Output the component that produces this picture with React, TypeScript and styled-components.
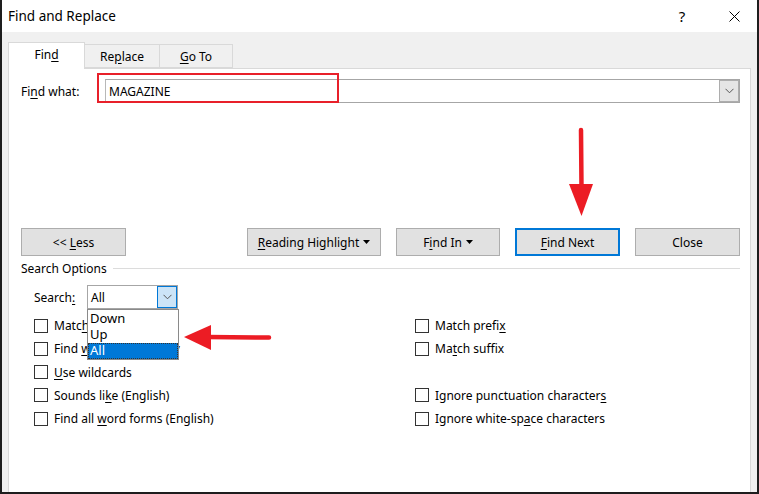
import React from "react";
import styled, { createGlobalStyle } from "styled-components";

const Global = createGlobalStyle`
  html, body { margin: 0; padding: 0; background: #fff; }
  body { font-family: "Noto Sans", "Segoe UI", sans-serif; font-size: 12px; color: #000; }
  * { box-sizing: border-box; }
`;

const Window = styled.div`
  width: 759px;
  height: 494px;
  border: 2px solid #1e1e1e;
  border-top: none;
  display: flex;
  flex-direction: column;
  overflow: hidden;
  background: #f0f0f0;
`;

const TitleBar = styled.div`
  height: 32px;
  flex: none;
  background: #fff;
  display: flex;
  align-items: center;
  padding-left: 6px;
`;

const Title = styled.div`
  font-size: 13.5px;
  flex: 1;
`;

const TitleButton = styled.div<{ $w: number }>`
  width: ${(p) => p.$w}px;
  height: 32px;
  display: flex;
  align-items: center;
  justify-content: center;
  font-size: 15px;
`;

const Body = styled.div`
  flex: 1;
  display: flex;
  flex-direction: column;
  padding: 10px 6px 0 6px;
  min-height: 0;
`;

const Tabs = styled.div`
  display: flex;
  align-items: flex-end;
  height: 26px;
  flex: none;
  position: relative;
  z-index: 1;
`;

const Tab = styled.div<{ $active?: boolean; $w: number }>`
  width: ${(p) => p.$w}px;
  height: ${(p) => (p.$active ? 27 : 24)}px;
  margin-bottom: ${(p) => (p.$active ? -1 : 0)}px;
  background: ${(p) => (p.$active ? "#fff" : "#f0f0f0")};
  border: 1px solid #d9d9d9;
  border-bottom: ${(p) => (p.$active ? "none" : "1px solid #d9d9d9")};
  border-left: ${(p) => (p.$active ? "1px solid #d9d9d9" : "none")};
  display: flex;
  align-items: center;
  justify-content: center;
  padding-bottom: ${(p) => (p.$active ? 3 : 0)}px;
`;

const Panel = styled.div`
  flex: 1;
  background: #fff;
  border: 1px solid #d9d9d9;
  border-bottom: none;
  padding: 10px 10px 0 12px;
  position: relative;
  display: flex;
  flex-direction: column;
`;

const FindRow = styled.div`
  display: flex;
  align-items: center;
  height: 24px;
  position: relative;
`;

const Label = styled.span<{ $w?: number }>`
  width: ${(p) => (p.$w ? `${p.$w}px` : "auto")};
  flex: none;
`;

const Combo = styled.div`
  flex: 1;
  height: 24px;
  border: 1px solid #a6a6a6;
  border-left-color: #b8b8b8;
  display: flex;
  align-items: center;
  padding-left: 3px;
`;

const ComboText = styled.span`
  flex: 1;
  font-size: 12px;
`;

const ComboButton = styled.div<{ $active?: boolean }>`
  width: 20px;
  height: 22px;
  background: ${(p) => (p.$active ? "#cce4f7" : "#e5e5e5")};
  border: 1px solid ${(p) => (p.$active ? "#0078d7" : "#adadad")};
  display: flex;
  align-items: center;
  justify-content: center;
`;

const Highlight = styled.div`
  position: absolute;
  left: 76px;
  top: -6px;
  width: 242px;
  height: 30px;
  border: 2px solid #e8202a;
  pointer-events: none;
`;

const Spacer = styled.div`
  height: 125px;
  flex: none;
`;

const ButtonRow = styled.div`
  display: flex;
  align-items: center;
  gap: 15px;
  height: 28px;
`;

const Button = styled.div<{ $w: number; $default?: boolean }>`
  width: ${(p) => p.$w}px;
  height: 28px;
  background: #e1e1e1;
  border: ${(p) => (p.$default ? "2px solid #0078d7" : "1px solid #adadad")};
  display: flex;
  align-items: center;
  justify-content: center;
  gap: 4px;
  flex: none;
`;

const Grow = styled.div`
  flex: 1;
`;

const GroupHeader = styled.div`
  display: flex;
  align-items: center;
  gap: 6px;
  margin-top: 3px;
  height: 18px;
  &::after {
    content: "";
    flex: 1;
    height: 1px;
    background: #dcdcdc;
  }
`;

const Options = styled.div`
  padding-left: 13px;
  display: flex;
  flex-direction: column;
`;

const SearchRow = styled.div`
  display: flex;
  align-items: center;
  margin-top: 8px;
  height: 24px;
`;

const SelectWrap = styled.div`
  position: relative;
  width: 91px;
  height: 24px;
`;

const Select = styled.div`
  height: 24px;
  border: 1px solid #a6a6a6;
  display: flex;
  align-items: center;
  padding-left: 3px;
`;

const List = styled.div`
  position: absolute;
  left: 0;
  top: 24px;
  width: 92px;
  border: 1px solid #8a8a8a;
  background: #fff;
  z-index: 3;
  padding: 1px 0 0 0;
`;

const ListItem = styled.div<{ $selected?: boolean }>`
  height: 16px;
  line-height: 15px;
  font-size: 13px;
  padding-left: 2px;
  background: ${(p) => (p.$selected ? "#0078d7" : "transparent")};
  color: ${(p) => (p.$selected ? "#fff" : "#000")};
  outline: ${(p) => (p.$selected ? "1px dotted #333" : "none")};
  outline-offset: -1px;
`;

const CheckGrid = styled.div`
  display: grid;
  grid-template-columns: 381px 1fr;
  grid-auto-rows: 23.25px;
  margin-top: 5px;
`;

const Check = styled.label`
  display: flex;
  align-items: center;
  gap: 6px;
  white-space: nowrap;
`;

const Box = styled.span`
  width: 14px;
  height: 14px;
  border: 1px solid #333;
  background: #fff;
  flex: none;
`;

const Arrow = styled.svg`
  position: absolute;
  pointer-events: none;
  z-index: 4;
`;

const U = styled.span`
  text-decoration: underline;
  text-underline-offset: 2px;
`;

const Chevron = () => (
  <svg width="9" height="6" viewBox="0 0 9 6">
    <path d="M0.5 0.8 L4.5 4.8 L8.5 0.8" fill="none" stroke="#555" strokeWidth="1" />
  </svg>
);

const Caret = () => (
  <svg width="7" height="4" viewBox="0 0 7 4">
    <path d="M0 0 L7 0 L3.5 4 Z" fill="#000" />
  </svg>
);

type Opt = { text: React.ReactNode } | null;

const left: Opt[] = [
  { text: <>Matc<U>h</U> case</> },
  { text: <>Find <U>w</U>hole words only</> },
  { text: <><U>U</U>se wildcards</> },
  { text: <>Sounds li<U>k</U>e (English)</> },
  { text: <>Find all <U>w</U>ord forms (English)</> },
];
const right: Opt[] = [
  { text: <>Match prefi<U>x</U></> },
  { text: <>Ma<U>t</U>ch suffix</> },
  null,
  { text: <>Ignore punctuation character<U>s</U></> },
  { text: <>Ignore white-sp<U>a</U>ce characters</> },
];

export default function App() {
  const cells: React.ReactNode[] = [];
  for (let i = 0; i < 5; i++) {
    [left[i], right[i]].forEach((o, j) => {
      cells.push(
        o ? (
          <Check key={`${i}-${j}`}>
            <Box />
            <span>{o.text}</span>
          </Check>
        ) : (
          <div key={`${i}-${j}`} />
        )
      );
    });
  }
  return (
    <>
      <Global />
      <Window>
        <TitleBar>
          <Title>Find and Replace</Title>
          <TitleButton $w={60}>?</TitleButton>
          <TitleButton $w={45}>
            <svg width="11" height="11" viewBox="0 0 11 11">
              <path d="M0.5 0.5 L10.5 10.5 M10.5 0.5 L0.5 10.5" stroke="#000" strokeWidth="1" />
            </svg>
          </TitleButton>
        </TitleBar>
        <Body>
          <Tabs>
            <Tab $active $w={77}><span>Fin<U>d</U></span></Tab>
            <Tab $w={75}><span>Re<U>p</U>lace</span></Tab>
            <Tab $w={73}><span><U>G</U>o To</span></Tab>
          </Tabs>
          <Panel>
            <FindRow>
              <Label $w={84}>Fi<U>n</U>d what:</Label>
              <Combo>
                <ComboText>MAGAZINE</ComboText>
                <ComboButton>
                  <Chevron />
                </ComboButton>
              </Combo>
              <Highlight />
            </FindRow>
            <Spacer />
            <ButtonRow>
              <Button $w={105}><span>&lt;&lt; <U>L</U>ess</span></Button>
              <Grow />
              <Button $w={134}><span><U>R</U>eading Highlight</span><Caret /></Button>
              <Button $w={104}><span>F<U>i</U>nd In</span><Caret /></Button>
              <Button $w={105} $default><span><U>F</U>ind Next</span></Button>
              <Button $w={105}><span>Close</span></Button>
            </ButtonRow>
            <GroupHeader>Search Options</GroupHeader>
            <Options>
              <SearchRow>
                <Label $w={53}>Search<U>:</U></Label>
                <SelectWrap>
                  <Select>
                    <ComboText>All</ComboText>
                    <ComboButton $active>
                      <Chevron />
                    </ComboButton>
                  </Select>
                  <List>
                    <ListItem>Down</ListItem>
                    <ListItem>Up</ListItem>
                    <ListItem $selected>All</ListItem>
                  </List>
                </SelectWrap>
              </SearchRow>
              <CheckGrid>{cells}</CheckGrid>
            </Options>
            <Arrow
              width="30"
              height="92"
              viewBox="0 0 30 92"
              style={{ left: 557, top: 58 }}
            >
              <path d="M15 3 L15.5 62" stroke="#ec1c24" strokeWidth="4.5" strokeLinecap="round" />
              <path d="M3 57 L27 57 L15.5 89 Z" fill="#ec1c24" />
            </Arrow>
            <Arrow
              width="96"
              height="30"
              viewBox="0 0 96 30"
              style={{ left: 172, top: 255 }}
            >
              <path d="M26 13 L88 13.5" stroke="#ec1c24" strokeWidth="4.5" strokeLinecap="round" />
              <path d="M3 13 L30 1 L30 26 Z" fill="#ec1c24" />
            </Arrow>
          </Panel>
        </Body>
      </Window>
    </>
  );
}
